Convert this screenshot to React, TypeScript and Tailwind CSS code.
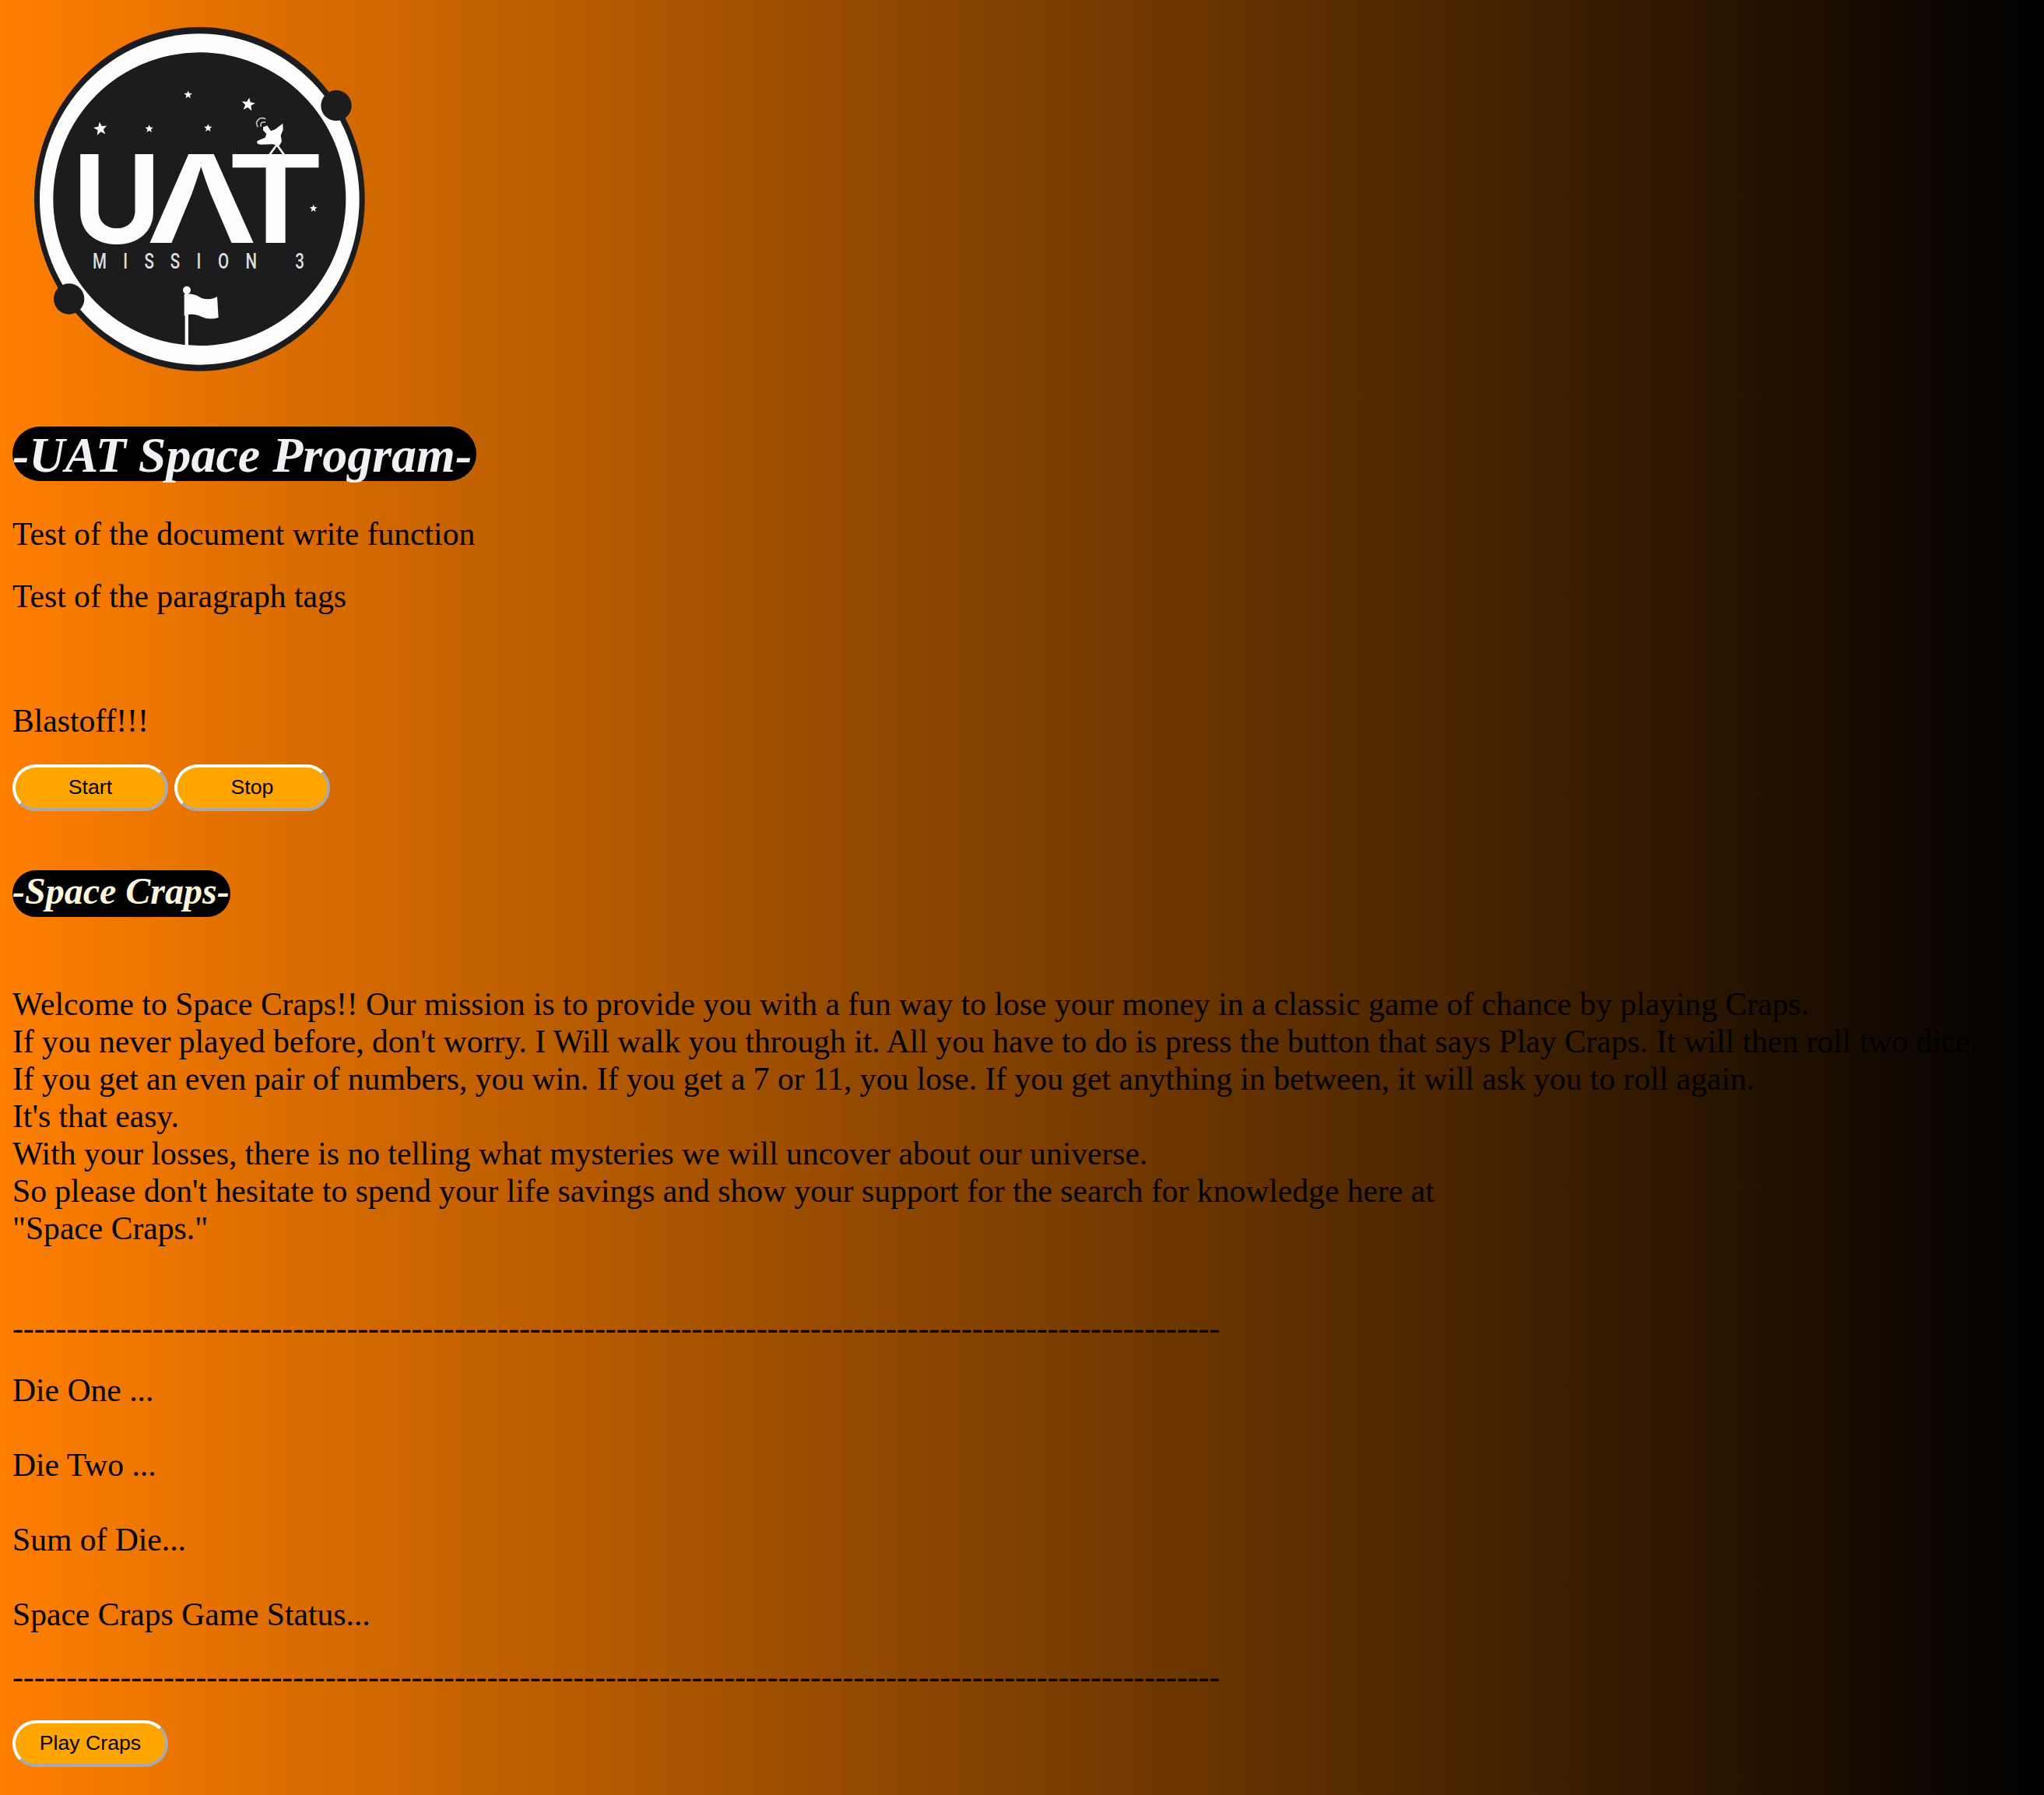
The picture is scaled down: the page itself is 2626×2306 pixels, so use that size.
import React from "react";

const RULE = "-".repeat(112);

const STAR = "M0 -26 L7 -9 L26 -8 L11 4 L16 23 L0 12 L-16 23 L-11 4 L-26 -8 L-7 -9 Z";

const stars = [
  { x: 725, y: 365, s: 0.6, r: 0 },
  { x: 957, y: 402, s: 1, r: 8 },
  { x: 387, y: 496, s: 1, r: -8 },
  { x: 575, y: 496, s: 0.6, r: 0 },
  { x: 802, y: 493, s: 0.6, r: 0 },
  { x: 1208, y: 803, s: 0.56, r: 0 },
];

function MissionLogo() {
  return (
    <svg viewBox="48 48 1452 1452" className="block h-[484px] w-[484px]" role="img" aria-label="UAT Mission 3">
      <ellipse cx="769" cy="767" rx="637" ry="663" fill="#1c1c1e" />
      <ellipse cx="769" cy="768" rx="616" ry="638" fill="#fdfdfc" />
      <ellipse cx="769" cy="767" rx="564" ry="565" fill="#1c1c1e" />
      <circle cx="1296" cy="407" r="59" fill="#1c1c1e" />
      <circle cx="266" cy="1152" r="59" fill="#1c1c1e" />

      {stars.map((p) => (
        <path key={`${p.x}-${p.y}`} d={STAR} fill="#fdfdfc" transform={`translate(${p.x} ${p.y}) rotate(${p.r}) scale(${p.s})`} />
      ))}

      {/* radio dish */}
      <g fill="#fdfdfc">
        <path d="M1090 476 L1060 499 L1044 505 L1030 484 L1014 490 L1014 502 L1027 516 L1022 530 L992 543 Q986 556 1005 557 L1050 556 L1076 562 L1086 545 L1082 522 L1091 500 Z" />
        <path d="M1038 598 L1067 558 L1096 598" fill="none" stroke="#fdfdfc" strokeWidth="8" />
        <path d="M994 490 Q982 472 998 459 Q1010 451 1024 459 M1006 488 Q1000 468 1024 471" fill="none" stroke="#bdbdbd" strokeWidth="5" />
      </g>

      <g fill="#fdfdfc" fontFamily="Inter, 'Liberation Sans', sans-serif">
        <text transform="translate(450 935) scale(0.995 1)" fontSize="470" fontWeight="700" textAnchor="middle">U</text>
        <text transform="translate(777 935) scale(1.25 1)" fontSize="470" fontWeight="600" textAnchor="middle">Λ</text>
        <text transform="translate(1062 935) scale(1.22 1)" fontSize="470" fontWeight="600" textAnchor="middle">T</text>
      </g>

      <text
        transform="translate(0 1036) scale(0.76 1)"
        x="505 636 757 888 1008 1133 1274 1403 1520"
        fill="#dededc"
        fontFamily="Roboto, 'Liberation Sans', sans-serif"
        fontSize="81"
        fontWeight="500"
        textAnchor="middle"
      >
        MISSION 3
      </text>

      {/* planted flag */}
      <g fill="#fdfdfc">
        <circle cx="720" cy="1118" r="15" />
        <rect x="713" y="1118" width="13" height="220" />
        <path d="M710 1134 Q745 1128 775 1148 Q810 1160 837 1143 L842 1224 Q805 1236 770 1218 Q740 1205 710 1217 Z" />
      </g>
    </svg>
  );
}

function PillButton({ children }: { children: React.ReactNode }) {
  return (
    <button className="block h-[60px] w-[200px] rounded-[30px] border-4 border-t-white border-l-white border-r-[#aaaaaa] border-b-[#aaaaaa] bg-[#ffa500] pb-0.5 text-center font-['Liberation_Sans',Arial,sans-serif] text-[26.667px] leading-[30px] text-black">
      {children}
    </button>
  );
}

export default function App() {
  return (
    <main className="h-[2306px] w-full overflow-hidden bg-[linear-gradient(to_right,#ff7f00,#000000)] p-4 font-['Liberation_Serif','Times_New_Roman',serif] text-[41.6px] leading-[48px] whitespace-nowrap text-black">
      <MissionLogo />

      <h1 className="mt-12 h-[70px] w-[596px] rounded-[35px] bg-black text-[64px] leading-[74px] font-bold text-[#f0f0f5] italic">
        -UAT Space Program-
      </h1>

      <p className="mt-11">Test of the document write function</p>
      <p className="mt-8">Test of the paragraph tags</p>
      <p className="mt-28">Blastoff!!!</p>

      <div className="mt-8 flex gap-2">
        <PillButton>Start</PillButton>
        <PillButton>Stop</PillButton>
      </div>

      <h2 className="mt-[76px] h-[60px] w-[280px] rounded-[30px] bg-black text-[48px] leading-[54px] font-bold text-[#fff8dc] italic">
        -Space Craps-
      </h2>

      <p className="mt-[88px]">
        Welcome to Space Craps!! Our mission is to provide you with a fun way to lose your money in a classic game of chance by playing Craps.
        <br />
        If you never played before, don't worry. I Will walk you through it. All you have to do is press the button that says Play Craps. It will then roll two dice.
        <br />
        If you get an even pair of numbers, you win. If you get a 7 or 11, you lose. If you get anything in between, it will ask you to roll again.
        <br />
        It's that easy.
        <br />
        With your losses, there is no telling what mysteries we will uncover about our universe.
        <br />
        So please don't hesitate to spend your life savings and show your support for the search for knowledge here at
        <br />
        "Space Craps."
      </p>

      <p className="mt-20">{RULE}</p>
      <div className="mt-8 flex flex-col gap-12">
        <p>Die One ...</p>
        <p>Die Two ...</p>
        <p>Sum of Die...</p>
        <p>Space Craps Game Status...</p>
      </div>
      <p className="mt-8">{RULE}</p>

      <div className="mt-8">
        <PillButton>Play Craps</PillButton>
      </div>
    </main>
  );
}
